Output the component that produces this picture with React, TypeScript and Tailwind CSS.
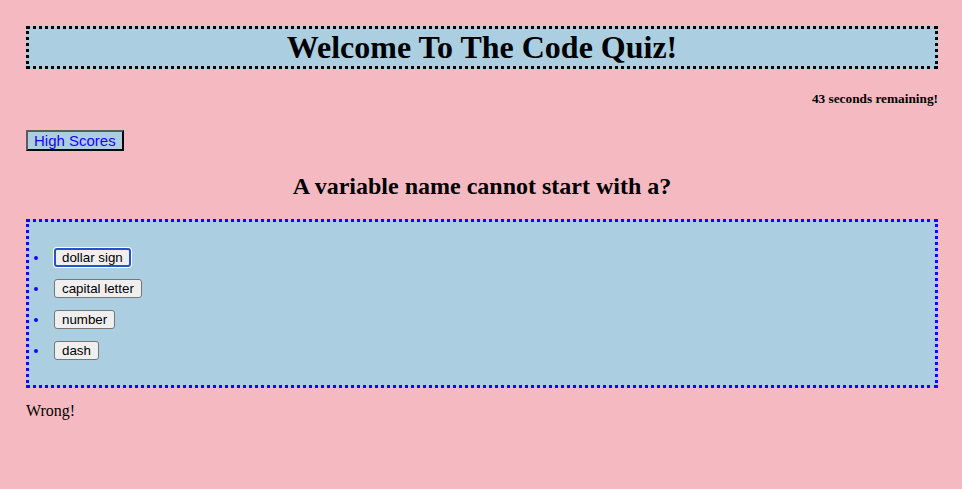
import React from "react";

const answers = ["dollar sign", "capital letter", "number", "dash"];

const App = () => {
  return (
    <div className="min-h-screen w-full bg-[#f5bac1] pl-[26px] pr-[24px] pt-[26px] font-['Liberation_Serif',serif] text-black">
      <h1 className="border-[3px] border-dotted border-black bg-[#abcfe1] text-center text-[32px] font-bold leading-[37px]">
        Welcome To The Code Quiz!
      </h1>

      <h5 className="mt-[22px] text-right text-[13.3px] font-bold leading-[15px]">
        43 seconds remaining!
      </h5>

      <button className="mt-[24px] block border-2 border-[#5c5c5c] bg-[#abcfe1] px-[6px] font-['Liberation_Sans',sans-serif] text-[15px] leading-[17px] text-[#1a00ff] [border-style:outset]">
        High Scores
      </button>

      <h2 className="mt-[21px] text-center text-[24px] font-bold leading-[28px]">
        A variable name cannot start with a?
      </h2>

      <ul className="mt-[19px] flex flex-col gap-[12px] border-[3px] border-dotted border-[#1a00ff] bg-[#abcfe1] pb-[25px] pt-[26px]">
        {answers.map((a, i) => (
          <li key={a} className="flex items-center">
            <span className="ml-[5px] mr-[16px] h-[4px] w-[4px] rounded-full bg-[#1a00ff]" />
            <button
              className={
                i === 0
                  ? "h-[19px] rounded-[3px] border-2 border-[#2453c9] bg-[#efefef] px-[6px] font-['Liberation_Sans',sans-serif] text-[13.33px] leading-[15px] shadow-[0_0_0_1px_#ffffff]"
                  : "h-[19px] rounded-[3px] border border-[#767676] bg-[#efefef] px-[7px] font-['Liberation_Sans',sans-serif] text-[13.33px] leading-[15px]"
              }
            >
              {a}
            </button>
          </li>
        ))}
      </ul>

      <p className="mt-[14px] text-[16px] leading-[18px]">Wrong!</p>
    </div>
  );
};

export default App;
